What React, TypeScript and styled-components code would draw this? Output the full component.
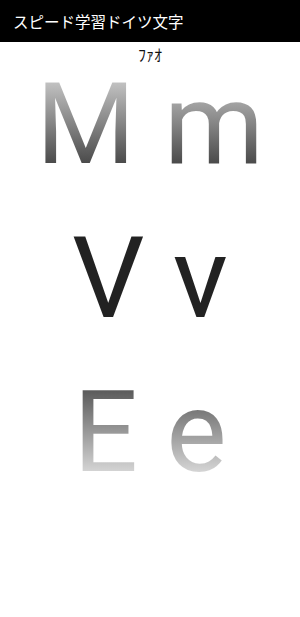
import styled, { createGlobalStyle } from "styled-components";

const GlobalStyle = createGlobalStyle`
  html, body {
    margin: 0;
    padding: 0;
    background: #fff;
  }
  body {
    font-family: Roboto, "Noto Sans CJK JP", sans-serif;
  }
`;

type Shade = "fadeDown" | "solid" | "fadeUp";

const rows: { upper: string; lower: string; shade: Shade }[] = [
  { upper: "M", lower: "m", shade: "fadeDown" },
  { upper: "V", lower: "v", shade: "solid" },
  { upper: "E", lower: "e", shade: "fadeUp" },
];

// gradients are laid over a 120px line box, glyphs sit roughly 15%..83%
const fills: Record<Shade, string> = {
  fadeDown: "linear-gradient(to bottom, #d0d0d0 10%, #c0c0c0 16%, #484848 84%, #404040 100%)",
  solid: "linear-gradient(to bottom, #222 0%, #222 100%)",
  fadeUp: "linear-gradient(to bottom, #505050 10%, #5c5c5c 16%, #d6d6d6 84%, #dcdcdc 100%)",
};

const App = () => {
  return (
    <>
      <GlobalStyle />
      <Page>
        <TitleBar>スピード学習ドイツ文字</TitleBar>
        <Reading>ﾌｧｵ</Reading>
        <Letters>
          {rows.map((row) => (
            <Pair key={row.upper} $shade={row.shade}>
              {row.upper} {row.lower}
            </Pair>
          ))}
        </Letters>
      </Page>
    </>
  );
};

export default App;

const Page = styled.div`
  width: 300px;
  min-height: 617px;
  display: flex;
  flex-direction: column;
  background: #fff;
`;

const TitleBar = styled.div`
  height: 42px;
  background: #000;
  color: #fff;
  font-family: "Noto Sans CJK JP", sans-serif;
  font-size: 15.5px;
  display: flex;
  align-items: center;
  padding-left: 13px;
`;

const Reading = styled.div`
  text-align: center;
  font-family: "Noto Sans CJK JP", sans-serif;
  font-size: 16px;
  color: #111;
  line-height: 19px;
  margin-top: 3px;
`;

const Letters = styled.div`
  display: flex;
  flex-direction: column;
  align-items: center;
  gap: 34px;
`;

const Pair = styled.div<{ $shade: Shade }>`
  font-family: Roboto, sans-serif;
  font-size: 114px;
  line-height: 120px;
  white-space: pre;
  color: transparent;
  background: ${(p) => fills[p.$shade]};
  -webkit-background-clip: text;
  background-clip: text;
`;
